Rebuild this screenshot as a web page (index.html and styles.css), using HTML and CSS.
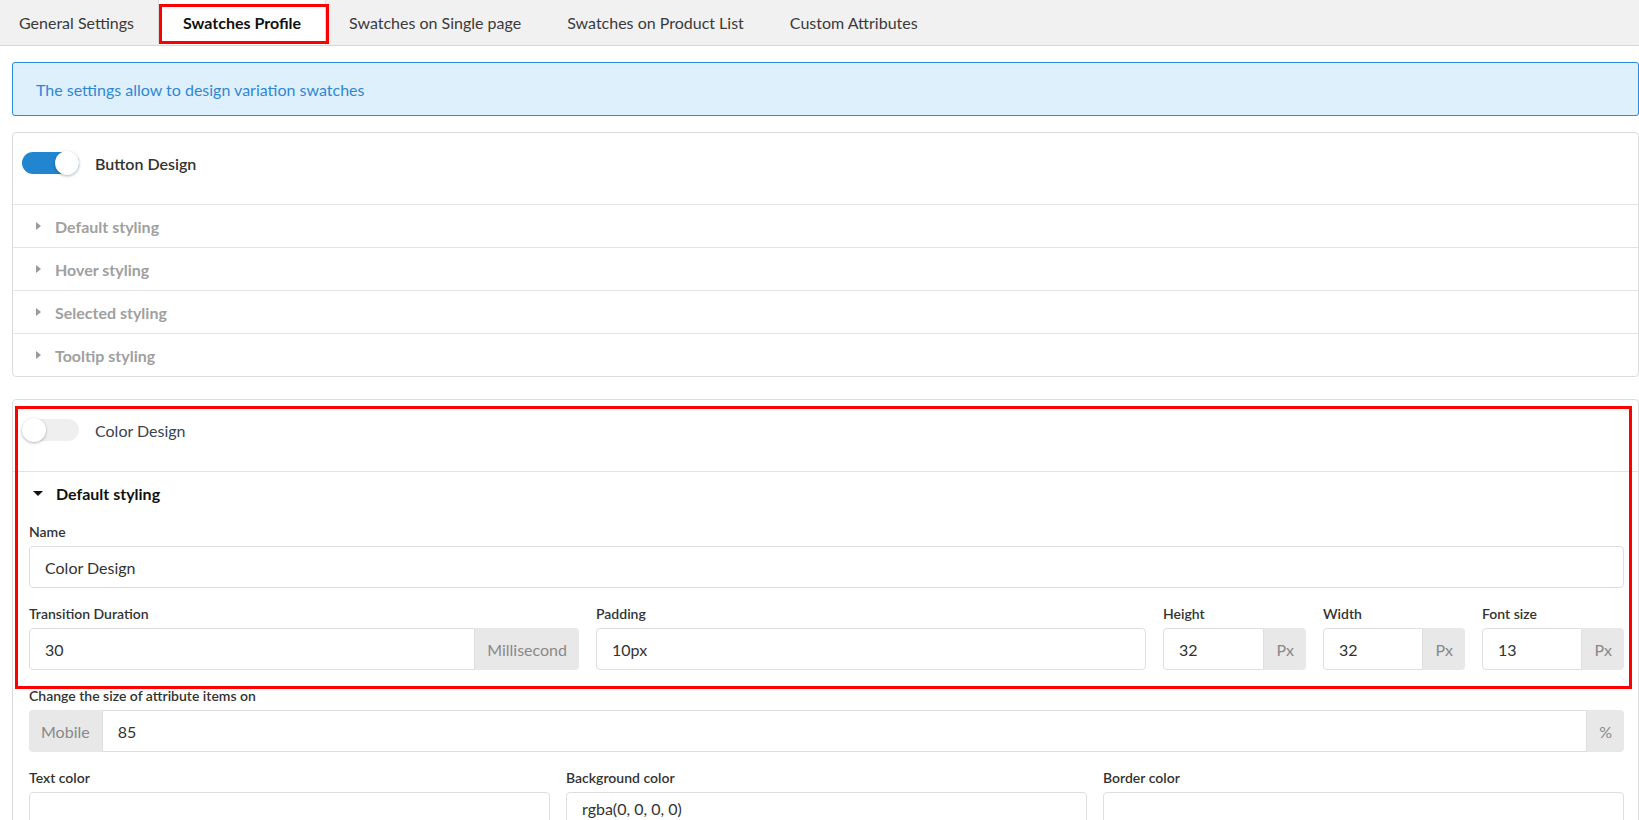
FILE: index.html
```html
<!DOCTYPE html>
<html lang="en">
<head>
    <meta charset="UTF-8">
    <meta name="viewport" content="width=device-width, initial-scale=1.0">
    <title>Swatches Profile</title>
    <link rel="stylesheet" href="styles.css">
</head>
<body>
    <nav class="tabs">
        <a class="tab">General Settings</a>
        <a class="tab active">Swatches Profile<span class="mark mark-tab"></span></a>
        <a class="tab">Swatches on Single page</a>
        <a class="tab">Swatches on Product List</a>
        <a class="tab">Custom Attributes</a>
    </nav>

    <main class="content">
        <div class="notice">The settings allow to design variation swatches</div>

        <section class="card">
            <div class="card-head">
                <span class="switch on"></span>
                <span class="card-title">Button Design</span>
            </div>
            <div class="fold"><i class="caret"></i>Default styling</div>
            <div class="fold"><i class="caret"></i>Hover styling</div>
            <div class="fold"><i class="caret"></i>Selected styling</div>
            <div class="fold"><i class="caret"></i>Tooltip styling</div>
        </section>

        <section class="card">
            <span class="mark mark-box"></span>
            <div class="card-head">
                <span class="switch"></span>
                <span class="card-title light">Color Design</span>
            </div>
            <div class="card-body">
                <div class="fold-open"><i class="caret-down"></i>Default styling</div>

                <div class="field">
                    <label>Name</label>
                    <input type="text" value="Color Design">
                </div>

                <div class="row row-five">
                    <div class="field">
                        <label>Transition Duration</label>
                        <div class="group">
                            <input type="text" value="30">
                            <span class="addon">Millisecond</span>
                        </div>
                    </div>
                    <div class="field">
                        <label>Padding</label>
                        <input type="text" value="10px">
                    </div>
                    <div class="field">
                        <label>Height</label>
                        <div class="group">
                            <input type="text" value="32">
                            <span class="addon">Px</span>
                        </div>
                    </div>
                    <div class="field">
                        <label>Width</label>
                        <div class="group">
                            <input type="text" value="32">
                            <span class="addon">Px</span>
                        </div>
                    </div>
                    <div class="field">
                        <label>Font size</label>
                        <div class="group">
                            <input type="text" value="13">
                            <span class="addon">Px</span>
                        </div>
                    </div>
                </div>

                <div class="field">
                    <label>Change the size of attribute items on</label>
                    <div class="group">
                        <span class="addon addon-left">Mobile</span>
                        <input type="text" value="85">
                        <span class="addon">%</span>
                    </div>
                </div>

                <div class="row row-three colors">
                    <div class="field">
                        <label>Text color</label>
                        <input type="text" value="">
                    </div>
                    <div class="field">
                        <label>Background color</label>
                        <input type="text" value="rgba(0, 0, 0, 0)">
                    </div>
                    <div class="field">
                        <label>Border color</label>
                        <input type="text" value="">
                    </div>
                </div>
            </div>
        </section>
    </main>
</body>
</html>
```

FILE: styles.css
```css
body {
    margin: 0;
    font-family: Lato, "Open Sans", sans-serif;
    font-size: 16px;
    color: #333;
    background: #fff;
    overflow: hidden;
}

/* tabs */
.tabs {
    display: flex;
    height: 45px;
    background-color: #f1f1f1;
    border-bottom: 1px solid #d6d6d6;
}
.tab {
    position: relative;
    display: flex;
    align-items: center;
    padding: 0 23px;
    color: #3a3a3a;
    cursor: pointer;
}
.tab:first-child {
    padding-left: 19px;
    padding-right: 24px;
}
.tab.active {
    padding: 0 24px;
    background-color: #fff;
    border-left: 1px solid #dcdcdc;
    border-right: 1px solid #dcdcdc;
    font-weight: bold;
    color: #111;
}

/* red annotation frames */
.mark {
    position: absolute;
    border: 3px solid #ff0000;
    box-sizing: border-box;
    pointer-events: none;
}
.mark-tab {
    left: 0;
    top: 4px;
    width: 170px;
    height: 40px;
}
.mark-box {
    left: 2px;
    top: 6px;
    width: 1617px;
    height: 283px;
    z-index: 2;
}

.content {
    padding: 16px 0 0 12px;
}

.notice {
    display: flex;
    align-items: center;
    height: 52px;
    padding: 0 23px;
    background-color: #dff0fd;
    border: 1px solid #2a8ae0;
    border-radius: 3px;
    color: #2f87d4;
}

/* cards */
.card {
    position: relative;
    margin-top: 16px;
    border: 1px solid #dcdcdc;
    border-radius: 4px;
    background: #fff;
}
.card + .card {
    margin-top: 22px;
}
.card-head {
    display: flex;
    align-items: center;
    gap: 16px;
    padding: 19px 9px 30px;
}
.card-title {
    font-weight: 600;
    color: #333;
}
.card-title.light {
    font-weight: normal;
    color: #3b4350;
}

.switch {
    position: relative;
    display: inline-block;
    width: 57px;
    height: 22px;
    border-radius: 11px;
    background-color: #efefef;
}
.switch::after {
    content: "";
    position: absolute;
    top: -1px;
    left: 0;
    width: 24px;
    height: 24px;
    border-radius: 50%;
    background: #fff;
    box-shadow: 0 1px 3px rgba(0, 0, 0, 0.3);
}
.switch.on {
    background-color: #2185d0;
}
.switch.on::after {
    left: auto;
    right: 0;
}

.fold {
    display: flex;
    align-items: center;
    gap: 14px;
    height: 42px;
    padding-left: 23px;
    border-top: 1px solid #e3e3e3;
    color: #a0a0a0;
    font-weight: bold;
}
.caret {
    width: 0;
    height: 0;
    border-top: 4px solid transparent;
    border-bottom: 4px solid transparent;
    border-left: 5px solid #9a9a9a;
}

.card-body {
    border-top: 1px solid #e3e3e3;
    padding: 0 14px 0 16px;
}
.fold-open {
    display: flex;
    align-items: center;
    gap: 13px;
    height: 42px;
    margin-bottom: 9px;
    padding-left: 4px;
    color: #111;
    font-weight: bold;
}
.caret-down {
    width: 0;
    height: 0;
    border-left: 5px solid transparent;
    border-right: 5px solid transparent;
    border-top: 5px solid #111;
}

/* form fields */
.field {
    margin-bottom: 17px;
}
.field label {
    display: block;
    margin-bottom: 6px;
    font-size: 14px;
    line-height: 17px;
    font-weight: 600;
    color: #333;
}
input[type="text"] {
    display: block;
    width: 100%;
    box-sizing: border-box;
    height: 42px;
    margin: 0;
    padding: 0 15px;
    border: 1px solid #dedede;
    border-radius: 4px;
    font-family: inherit;
    font-size: 16px;
    color: #333;
    background: #fff;
    outline: none;
}
.colors input[type="text"] {
    padding-bottom: 10px;
}

.group {
    display: flex;
    height: 42px;
}
.group input[type="text"] {
    flex: 1;
    min-width: 0;
    height: 42px;
    border-radius: 4px 0 0 4px;
}
.group .addon-left + input[type="text"] {
    border-radius: 0;
}
.addon {
    display: flex;
    align-items: center;
    padding: 0 12px;
    background-color: #e8e8e8;
    color: #888;
    border-radius: 0 4px 4px 0;
}
.addon-left {
    border-radius: 4px 0 0 4px;
}

.row {
    display: grid;
}
.row-five {
    grid-template-columns: 1fr 1fr 143px 142px 142px;
    column-gap: 17px;
}
.row-three {
    grid-template-columns: 1fr 1fr 1fr;
    column-gap: 16px;
}
```
